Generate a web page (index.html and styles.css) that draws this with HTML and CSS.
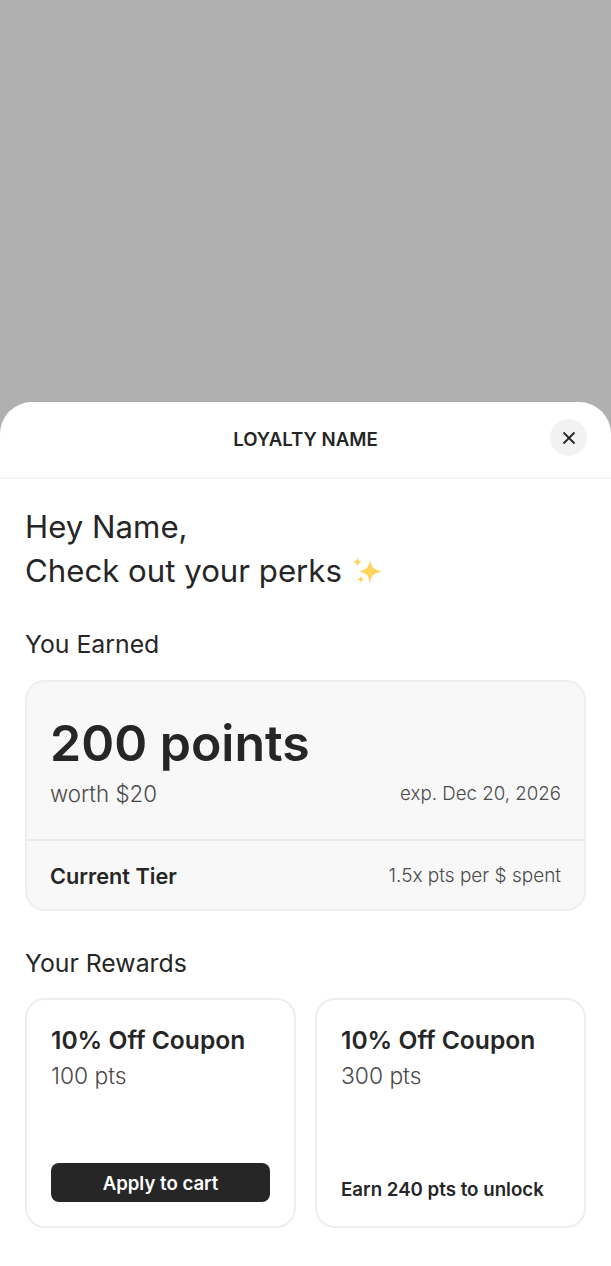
FILE: index.html
```html
<!DOCTYPE html>
<html lang="en">
<head>
<meta charset="utf-8">
<title>Loyalty</title>
<link rel="stylesheet" href="styles.css">
</head>
<body>
<div class="screen">
  <div class="backdrop"></div>
  <section class="sheet">
    <header class="sheet-head">
      <h1 class="brand">LOYALTY NAME</h1>
      <button class="close" aria-label="Close">
        <svg width="14" height="14" viewBox="0 0 14 14" fill="none"><path d="M1.500 1.500l11 11M12.500 1.500l-11 11" stroke="#262626" stroke-width="1.800"/></svg>
      </button>
    </header>
    <div class="sheet-body">
      <h2 class="greeting">Hey Name,<br>Check out your perks <svg class="sparkle" width="32" height="30" viewBox="0 0 32 30"><path fill="#FFD35C" d="M19 2c.8 7.500 2.600 10.100 12 12.500C21.600 16.400 19.800 19 19 27.500c-.8-8.500-2.600-11.100-11-13C16.400 12.100 18.200 9.500 19 2zM6.500 0c.4 3 1.200 4.100 4.500 5-3.300.9-4.100 2-4.500 5-.4-3-1.200-4.100-4.500-5 3.300-.9 4.100-2 4.500-5zM10 18c.3 2.700 1 3.600 4 4.300-3 .7-3.700 1.600-4 4.700-.3-3.100-1-4-4-4.700 3-.7 3.700-1.600 4-4.300z"/></svg></h2>
      <h3 class="section-title earned-title">You Earned</h3>
      <div class="points-card">
        <div class="points-main">
          <div class="points">200 points</div>
          <div class="points-row">
            <span class="worth">worth $20</span>
            <span class="exp">exp. Dec 20, 2026</span>
          </div>
        </div>
        <div class="tier-row">
          <span class="tier">Current Tier</span>
          <span class="perk-rate">1.5x pts per $ spent</span>
        </div>
      </div>
      <h3 class="section-title rewards-title">Your Rewards</h3>
      <div class="rewards">
        <article class="reward">
          <div class="reward-name">10% Off Coupon</div>
          <div class="reward-pts">100 pts</div>
          <button class="apply">Apply to cart</button>
        </article>
        <article class="reward">
          <div class="reward-name">10% Off Coupon</div>
          <div class="reward-pts">300 pts</div>
          <div class="unlock">Earn 240 pts to unlock</div>
        </article>
      </div>
    </div>
  </section>
</div>
</body>
</html>
```
FILE: styles.css
```css
* { box-sizing: border-box; }
html, body { margin: 0; padding: 0; }
body { font-family: Inter, "Liberation Sans", sans-serif; color: #262626; background: #b0b0b0; }
.screen { width: 611px; height: 1266px; display: flex; flex-direction: column; overflow: hidden; }
.backdrop { height: 402px; flex: none; background: #b0b0b0; }
.sheet { flex: 1; background: #fff; border-radius: 32px 32px 0 0; }
.sheet-head { height: 77px; display: flex; align-items: center; justify-content: center; border-bottom: 2px solid #f5f5f5; position: relative; }
.brand { margin: 0; font-size: 18.67px; line-height: 24px; font-weight: 600; color: #262626; }
.close { position: absolute; right: 24px; top: 17px; width: 37px; height: 37px; border: 0; padding: 0; border-radius: 50%; background: #f2f2f2; display: flex; align-items: center; justify-content: center; }
.sheet-body { padding: 26px 25px 0; }
.greeting { margin: 0; font-size: 31.2px; line-height: 44px; font-weight: 400; }
.sparkle { vertical-align: -5px; }
.section-title { margin: 0; font-size: 24.8px; line-height: 32px; font-weight: 400; }
.earned-title { margin-top: 35px; }
.rewards-title { margin-top: 36px; }
.points-card { margin-top: 20px; height: 231px; background: #f8f8f9; border: 2px solid #eeeeee; border-radius: 20px; display: flex; flex-direction: column; }
.points-main { height: 159px; border-bottom: 2px solid #ebebee; padding: 29px 23px 0; }
.points { font-size: 50px; line-height: 64px; font-weight: 600; }
.points-row { display: flex; justify-content: space-between; align-items: center; margin-top: 3px; }
.worth { font-size: 22.3px; line-height: 32px; font-weight: 300; color: #4a4a4a; }
.exp { font-size: 18.7px; line-height: 26px; font-weight: 300; color: #4a4a4a; }
.perk-rate { font-size: 19px; line-height: 26px; font-weight: 300; color: #4a4a4a; }
.tier-row { flex: 1; display: flex; justify-content: space-between; align-items: center; padding: 2px 23px 0; }
.tier { font-size: 21.7px; line-height: 32px; font-weight: 600; }
.rewards { margin-top: 19px; display: grid; grid-template-columns: 271px 271px; gap: 19px; }
.reward { height: 230px; border: 2px solid #eeeeee; border-radius: 20px; padding: 24px; display: flex; flex-direction: column; }
.reward-name { font-size: 24.6px; line-height: 32px; font-weight: 600; }
.reward-pts { font-size: 22.8px; line-height: 32px; font-weight: 300; color: #4a4a4a; margin-top: 4px; }
.apply { margin-top: auto; height: 39px; border: 0; border-radius: 8px; background: #262626; color: #fff; font: 600 18.6px/24px Inter, sans-serif; }
.unlock { margin-top: auto; font-size: 18.7px; line-height: 24px; font-weight: 600; }
```
